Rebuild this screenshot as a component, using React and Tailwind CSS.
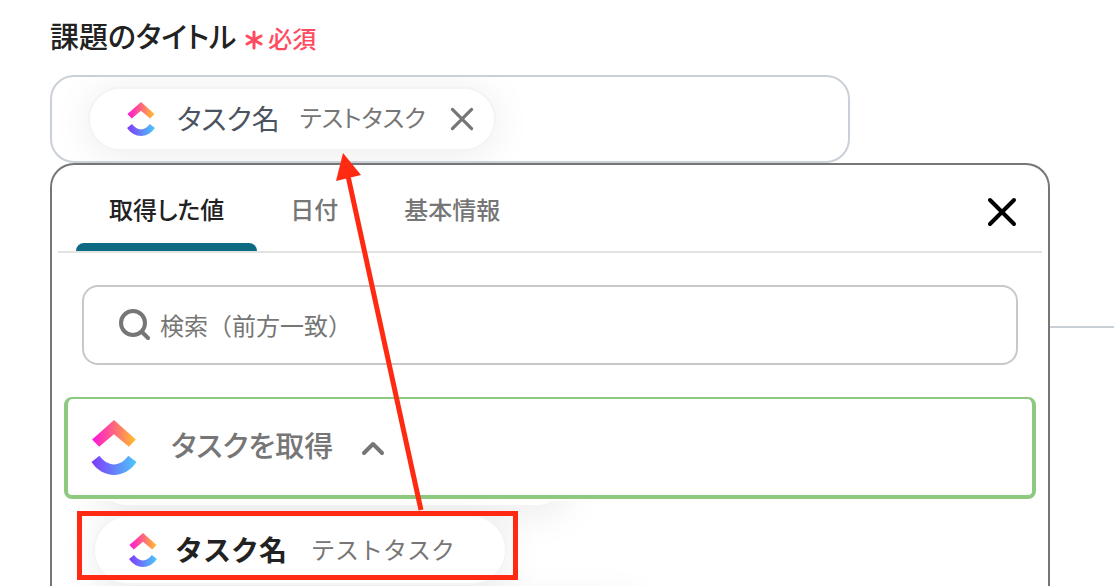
import React from "react";

const tabs = ["取得した値", "日付", "基本情報"];

function ClickUpLogo({ className }) {
  const id = React.useId();
  return (
    <svg viewBox="0 0 136 166" className={className} aria-hidden="true">
      <defs>
        <linearGradient id={`${id}top`} x1="0" y1="0" x2="1" y2="0">
          <stop offset="0" stopColor="#ff12dc" />
          <stop offset="0.5" stopColor="#ff6680" />
          <stop offset="1" stopColor="#ffc227" />
        </linearGradient>
        <linearGradient id={`${id}bottom`} x1="0" y1="0" x2="1" y2="0">
          <stop offset="0" stopColor="#8038fb" />
          <stop offset="1" stopColor="#4bc9fa" />
        </linearGradient>
      </defs>
      <path d="M2 59L68 0L134 59L113 81L68 43L23 81Z" fill={`url(#${id}top)`} />
      <path
        d="M0 127L24 108C37 125 52 134 68 134C84 134 99 125 111 108L136 127C118 153 94 166 68 166C42 166 18 153 0 127Z"
        fill={`url(#${id}bottom)`}
      />
    </svg>
  );
}

function CloseIcon({ className, strokeWidth }) {
  return (
    <svg
      viewBox="0 0 30 30"
      className={className}
      fill="none"
      stroke="currentColor"
      strokeWidth={strokeWidth}
      strokeLinecap="round"
      aria-hidden="true"
    >
      <path d="M3 3L27 27M27 3L3 27" />
    </svg>
  );
}

function TitleField() {
  return (
    <div>
      <div id="title-label" className="flex h-10 items-center">
        <span className="text-[29px] font-medium text-[#222] [font-feature-settings:'palt']">
          課題のタイトル
        </span>
        <span className="ml-2 flex items-center gap-1 pt-1 text-2xl font-medium text-[#ff4b5f]">
          <svg
            viewBox="0 0 20 20"
            className="mt-1 size-5"
            fill="none"
            stroke="currentColor"
            strokeWidth="3"
            strokeLinecap="round"
            aria-hidden="true"
          >
            <path d="M10 2V18M3 6L17 14M17 6L3 14" />
          </svg>
          必須
        </span>
      </div>
      <div
        role="group"
        aria-labelledby="title-label"
        className="mt-[19px] flex h-[88px] max-w-[800px] items-center overflow-hidden rounded-3xl border-2 border-[#cad0d7] pl-9"
      >
        <div className="flex h-16 items-center rounded-full border-2 border-[#f4f4f4] bg-white pr-5 pl-[37px] shadow-[0_4px_40px_rgba(0,0,0,0.08)] [font-feature-settings:'palt']">
          <ClickUpLogo className="h-[34px] w-7" />
          <span className="ml-[22px] pb-0.5 text-[28px] text-[#4b545e]">タスク名</span>
          <span className="ml-5 pb-1 text-2xl text-[#767676]">テストタスク</span>
          <button type="button" aria-label="削除" className="ml-6 text-[#767676]">
            <CloseIcon className="size-6" strokeWidth={4} />
          </button>
        </div>
      </div>
    </div>
  );
}

function ValuePicker() {
  return (
    <div className="relative h-full w-full max-w-[1000px] overflow-hidden rounded-t-3xl border-2 border-b-0 border-[#767676] bg-white">
      <div className="mx-1.5 flex h-[88px] items-end justify-between border-b-2 border-[#e2e2e2] pl-[18px]">
        <div role="tablist" className="flex">
          {tabs.map((tab, i) => (
            <button
              key={tab}
              type="button"
              role="tab"
              aria-selected={i === 0}
              className={
                i === 0
                  ? "flex flex-col text-2xl font-medium text-[#222]"
                  : "flex flex-col text-2xl font-medium text-[#767676]"
              }
            >
              <span className="flex h-[66px] items-center px-[33px] pb-0.5 [font-feature-settings:'palt']">
                {tab}
              </span>
              <span
                className={i === 0 ? "h-2 w-full rounded-t-lg bg-[#0e6a82]" : "h-2 w-full"}
              />
            </button>
          ))}
        </div>
        <button type="button" aria-label="閉じる" className="mr-[25px] mb-6 text-black">
          <CloseIcon className="size-[30px]" strokeWidth={4} />
        </button>
      </div>

      <label className="mx-[30px] mt-8 flex h-20 items-center rounded-2xl border-2 border-[#c8c8c8] pl-[34px]">
        <svg
          viewBox="0 0 32 32"
          className="size-8 text-[#767676]"
          fill="none"
          stroke="currentColor"
          strokeWidth="4"
          strokeLinecap="round"
          aria-hidden="true"
        >
          <circle cx="15" cy="14" r="12" />
          <path d="M24 23L30 29" />
        </svg>
        <input
          type="text"
          aria-label="検索"
          placeholder="検索（前方一致）"
          className="ml-2.5 min-w-0 flex-1 text-2xl text-[#222] outline-none placeholder:text-[#767676]"
        />
      </label>

      <button
        type="button"
        aria-expanded="true"
        className="mx-3 mt-8 flex h-[102px] w-[calc(100%-24px)] items-center rounded-lg border-4 border-t-2 border-[#8dc97f] pl-[23px] text-[29px] font-medium text-[#767676] [font-feature-settings:'palt']"
      >
        <ClickUpLogo className="h-[55px] w-[46px]" />
        <span className="ml-[34px] pb-1">タスクを取得</span>
        <svg
          viewBox="0 0 24 16"
          className="mt-0.5 ml-7 h-4 w-6"
          fill="none"
          stroke="currentColor"
          strokeWidth="4"
          strokeLinecap="round"
          strokeLinejoin="round"
          aria-hidden="true"
        >
          <path d="M3 13L12 4L21 13" />
        </svg>
      </button>

      <ul className="mx-3 mt-0.5 h-96 overflow-hidden pl-[29px]">
        <li className="-mt-16 h-[70px] w-[478px] rounded-full border-2 border-[#f4f4f4] bg-white shadow-[0_8px_40px_rgba(0,0,0,0.08)]" />
        <li className="mt-2 flex">
          <button
            type="button"
            className="flex h-[70px] items-center rounded-full border-2 border-[#f4f4f4] bg-white pr-[50px] pl-[34px] shadow-[0_8px_40px_rgba(0,0,0,0.08)]"
          >
            <ClickUpLogo className="h-[34px] w-7" />
            <span className="ml-[18px] pb-0.5 text-[28px] font-bold text-[#222]">タスク名</span>
            <span className="ml-6 pb-0.5 text-2xl text-[#767676]">テストタスク</span>
          </button>
        </li>
        <li className="mt-2 h-[70px] w-[560px] rounded-full border-2 border-[#f4f4f4] bg-white shadow-[0_8px_40px_rgba(0,0,0,0.08)]" />
      </ul>
    </div>
  );
}

// Red frame and arrow drawn on top of the form
function Annotation() {
  return (
    <>
      <div className="pointer-events-none absolute top-[511px] left-[77px] h-[69px] w-[441px] border-5 border-[#ff2a12]" />
      <svg
        viewBox="0 0 100 360"
        className="pointer-events-none absolute top-[152px] left-[330px] h-[360px] w-[100px]"
        aria-hidden="true"
      >
        <path d="M91 358L18 24" stroke="#ff2a12" strokeWidth="5" fill="none" />
        <path d="M13 1L31 23L6 29Z" fill="#ff2a12" />
      </svg>
    </>
  );
}

export default function App() {
  return (
    <div className="relative flex h-screen flex-col overflow-hidden bg-white pt-4 pl-[50px] font-['Noto_Sans_CJK_JP',sans-serif]">
      <TitleField />
      <div className="flex min-h-0 flex-1">
        <ValuePicker />
        <div className="mt-[163px] h-0.5 min-w-8 flex-1 bg-[#cad0d7]" />
      </div>
      <Annotation />
    </div>
  );
}
